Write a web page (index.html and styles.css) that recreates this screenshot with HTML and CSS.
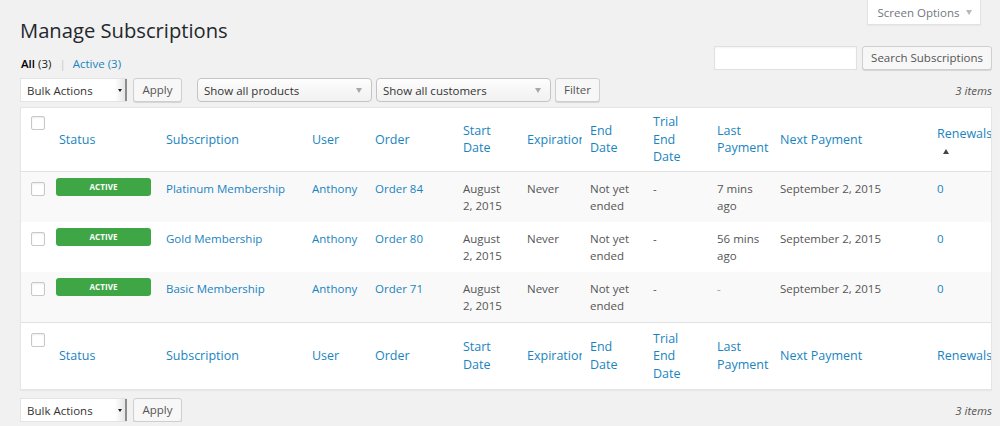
FILE: index.html
```html
<!DOCTYPE html>
<html lang="en">
<head>
<meta charset="utf-8">
<title>Manage Subscriptions</title>
<link rel="stylesheet" href="styles.css">
</head>
<body>
<div class="wrap">
  <div class="topbar">
    <h1>Manage Subscriptions</h1>
    <button class="screen-options">Screen Options <span class="so-arrow"></span></button>
  </div>

  <div class="subbar">
    <ul class="subsubsub">
      <li class="current">All <span class="count">(3)</span></li>
      <li class="sep">|</li>
      <li><a href="#">Active <span class="count">(3)</span></a></li>
    </ul>
    <div class="search-box">
      <span class="search-input"></span>
      <button class="button">Search Subscriptions</button>
    </div>
  </div>

  <div class="tablenav">
    <div class="bulk-select"><span>Bulk Actions</span><span class="mac-arrow"></span></div>
    <button class="button apply">Apply</button>
    <div class="select products"><span>Show all products</span><span class="sel-arrow"></span></div>
    <div class="select customers"><span>Show all customers</span><span class="sel-arrow"></span></div>
    <button class="button filter">Filter</button>
    <span class="displaying-num">3 items</span>
  </div>

  <table class="widefat">
    <colgroup>
      <col class="c-cb"><col class="c-status"><col class="c-sub"><col class="c-user"><col class="c-order">
      <col class="c-start"><col class="c-exp"><col class="c-end"><col class="c-trial"><col class="c-last">
      <col class="c-next"><col class="c-ren">
    </colgroup>
    <thead>
      <tr>
        <th class="check-column"><span class="cb"></span></th>
        <th><a href="#">Status</a></th>
        <th><a href="#">Subscription</a></th>
        <th><a href="#">User</a></th>
        <th><a href="#">Order</a></th>
        <th><a href="#">Start Date</a></th>
        <th><a href="#">Expiration</a></th>
        <th><a href="#">End Date</a></th>
        <th><a href="#">Trial End Date</a></th>
        <th><a href="#">Last Payment</a></th>
        <th><a href="#">Next Payment</a></th>
        <th class="sorted"><a href="#">Renewals</a><span class="sorting-indicator"></span></th>
      </tr>
    </thead>
    <tbody>
      <tr class="alt">
        <td class="check-column"><span class="cb"></span></td>
        <td><span class="badge">ACTIVE</span></td>
        <td><a href="#">Platinum Membership</a></td>
        <td><a href="#">Anthony</a></td>
        <td><a href="#">Order 84</a></td>
        <td>August 2, 2015</td>
        <td>Never</td>
        <td>Not yet ended</td>
        <td>-</td>
        <td>7 mins ago</td>
        <td>September 2, 2015</td>
        <td><a href="#">0</a></td>
      </tr>
      <tr>
        <td class="check-column"><span class="cb"></span></td>
        <td><span class="badge">ACTIVE</span></td>
        <td><a href="#">Gold Membership</a></td>
        <td><a href="#">Anthony</a></td>
        <td><a href="#">Order 80</a></td>
        <td>August 2, 2015</td>
        <td>Never</td>
        <td>Not yet ended</td>
        <td>-</td>
        <td>56 mins ago</td>
        <td>September 2, 2015</td>
        <td><a href="#">0</a></td>
      </tr>
      <tr class="alt">
        <td class="check-column"><span class="cb"></span></td>
        <td><span class="badge">ACTIVE</span></td>
        <td><a href="#">Basic Membership</a></td>
        <td><a href="#">Anthony</a></td>
        <td><a href="#">Order 71</a></td>
        <td>August 2, 2015</td>
        <td>Never</td>
        <td>Not yet ended</td>
        <td>-</td>
        <td class="muted">-</td>
        <td>September 2, 2015</td>
        <td><a href="#">0</a></td>
      </tr>
    </tbody>
    <tfoot>
      <tr>
        <th class="check-column"><span class="cb"></span></th>
        <th><a href="#">Status</a></th>
        <th><a href="#">Subscription</a></th>
        <th><a href="#">User</a></th>
        <th><a href="#">Order</a></th>
        <th><a href="#">Start Date</a></th>
        <th><a href="#">Expiration</a></th>
        <th><a href="#">End Date</a></th>
        <th><a href="#">Trial End Date</a></th>
        <th><a href="#">Last Payment</a></th>
        <th><a href="#">Next Payment</a></th>
        <th><a href="#">Renewals</a></th>
      </tr>
    </tfoot>
  </table>

  <div class="tablenav bottom">
    <div class="bulk-select"><span>Bulk Actions</span><span class="mac-arrow"></span></div>
    <button class="button apply">Apply</button>
    <span class="displaying-num">3 items</span>
  </div>
</div>
</body>
</html>
```

FILE: styles.css
```css
html, body {
  margin: 0;
  padding: 0;
}
body {
  background: #f1f1f1;
  font-family: "Open Sans", "Liberation Sans", sans-serif;
  font-size: 11.5px;
  color: #444;
}
a {
  color: #1a84c0;
  text-decoration: none;
}
.wrap {
  padding: 0 8px 0 20px;
}

/* top */
.topbar {
  display: flex;
  justify-content: space-between;
  align-items: flex-start;
  height: 46px;
}
h1 {
  margin: 14px 0 0;
  font-size: 20.2px;
  font-weight: 400;
  line-height: 32px;
  color: #23282d;
}
.screen-options {
  width: 114px;
  height: 25px;
  margin-right: 11px;
  padding: 0 0 0 2px;
  background: #fff;
  border: 1px solid #e2e2e2;
  border-top: none;
  box-shadow: 0 1px 1px rgba(0,0,0,.04);
  font-family: "Open Sans", sans-serif;
  font-size: 11.5px;
  color: #72777c;
  display: flex;
  align-items: center;
  justify-content: center;
  gap: 7px;
}
.so-arrow {
  width: 0;
  height: 0;
  border-left: 3.5px solid transparent;
  border-right: 3.5px solid transparent;
  border-top: 5px solid #b4b9be;
}

.subbar {
  display: flex;
  justify-content: space-between;
  height: 27px;
}
.subsubsub {
  margin: 0;
  padding: 9px 0 0 1px;
  list-style: none;
  display: flex;
  line-height: 18px;
  color: #666;
}
.subsubsub .current {
  color: #000;
  font-weight: 600;
}
.subsubsub .current .count {
  font-weight: 400;
  color: #222;
}
.subsubsub .sep {
  color: #c8c8c8;
  margin: 0 7px 0 8px;
}
.search-box {
  display: flex;
  gap: 5px;
  align-items: flex-start;
}
.search-input {
  width: 141px;
  height: 22px;
  border: 1px solid #e0e0e0;
  background: #fff;
  box-shadow: inset 0 1px 2px rgba(0,0,0,.05);
}
.button {
  height: 24px;
  padding: 0 8px;
  border: 1px solid #cfcfcf;
  border-radius: 3px;
  background: #f7f7f7;
  box-shadow: 0 1px 0 #d6d6d6;
  color: #555;
  font-family: "Open Sans", sans-serif;
  font-size: 11.5px;
  line-height: 22px;
  white-space: nowrap;
}

/* tablenav */
.tablenav {
  display: flex;
  align-items: center;
  height: 24px;
  margin-top: 5px;
}
.tablenav.bottom {
  margin-top: 8px;
}
.bulk-select {
  box-sizing: content-box;
  width: 100px;
  height: 22px;
  padding-left: 6px;
  border: 1px solid #e4e4e4;
  border-right: none;
  background: #fff;
  display: flex;
  align-items: center;
  justify-content: space-between;
  font-size: 11.5px;
  color: #333;
}
.mac-arrow {
  width: 10px;
  height: 22px;
  border-right: 2px solid #8d8d8d;
  background: linear-gradient(to right, #fff, #e6e6e6);
  display: flex;
  align-items: center;
  justify-content: center;
}
.mac-arrow::after {
  content: "";
  border-left: 2.5px solid transparent;
  border-right: 2.5px solid transparent;
  border-top: 3px solid #222;
}
.apply {
  margin-left: 6px;
  padding: 0 8.5px;
}
.select {
  box-sizing: border-box;
  height: 24px;
  width: 175px;
  border: 1px solid #c4c4c4;
  border-radius: 4px;
  background: linear-gradient(#fdfdfd, #f1f1f1);
  display: flex;
  align-items: center;
  justify-content: space-between;
  padding: 0 9px 0 6px;
  color: #333;
  font-size: 11.5px;
}
.products {
  margin-left: 15px;
}
.customers {
  margin-left: 4px;
}
.sel-arrow {
  border-left: 3px solid transparent;
  border-right: 3px solid transparent;
  border-top: 5px solid #a8a8a8;
}
.filter {
  margin-left: 4px;
}
.displaying-num {
  margin-left: auto;
  font-style: italic;
  color: #555;
}

/* table */
.widefat {
  width: 100%;
  margin-top: 5px;
  table-layout: fixed;
  border-collapse: separate;
  border-spacing: 0;
  background: #fff;
  border: 1px solid #e5e5e5;
  box-shadow: 0 1px 1px rgba(0,0,0,.04);
}
.c-cb { width: 30px; }
.c-status { width: 107px; }
.c-sub { width: 146px; }
.c-user { width: 63px; }
.c-order { width: 88px; }
.c-start { width: 64px; }
.c-exp { width: 63px; }
.c-end { width: 63px; }
.c-trial { width: 64px; }
.c-last { width: 63px; }
.c-next { width: 157px; }
.c-ren { width: 62px; }

.widefat th,
.widefat td {
  text-align: left;
  font-weight: 400;
  overflow: hidden;
}
.widefat thead th,
.widefat tfoot th {
  padding: 5px 8px;
  font-size: 12.5px;
  line-height: 17.5px;
  vertical-align: middle;
}
.widefat thead th {
  border-bottom: 1px solid #e1e1e1;
}
.widefat tfoot th {
  border-top: 1px solid #e1e1e1;
  padding: 7px 8px;
}
.widefat th.check-column {
  vertical-align: top;
  padding: 8px 0 0 10px;
}
.widefat tfoot th.check-column {
  padding-top: 10px;
}
.widefat tbody td {
  padding: 8px;
  line-height: 17px;
  vertical-align: top;
  color: #555;
}
.widefat tbody td.check-column {
  padding: 10px 0 0 10px;
}
.widefat tbody tr.alt td {
  background: #f9f9f9;
}
.widefat td.muted {
  color: #999;
}
.cb {
  display: block;
  width: 12px;
  height: 12px;
  border: 1px solid #c6c9cc;
  border-radius: 2px;
  background: #fff;
  box-shadow: inset 0 1px 2px rgba(0,0,0,.08);
}
.badge {
  display: block;
  width: 95px;
  height: 18px;
  margin: -2px 0 0 -3px;
  border-radius: 3px;
  background: #3fa646;
  color: #fff;
  font-size: 8px;
  font-weight: 700;
  line-height: 18px;
  text-align: center;
  letter-spacing: 0.1px;
}
.sorting-indicator {
  display: block;
  width: 0;
  height: 0;
  margin: 6px 0 0 6px;
  border-left: 3.5px solid transparent;
  border-right: 3.5px solid transparent;
  border-bottom: 5px solid #444;
}
```
